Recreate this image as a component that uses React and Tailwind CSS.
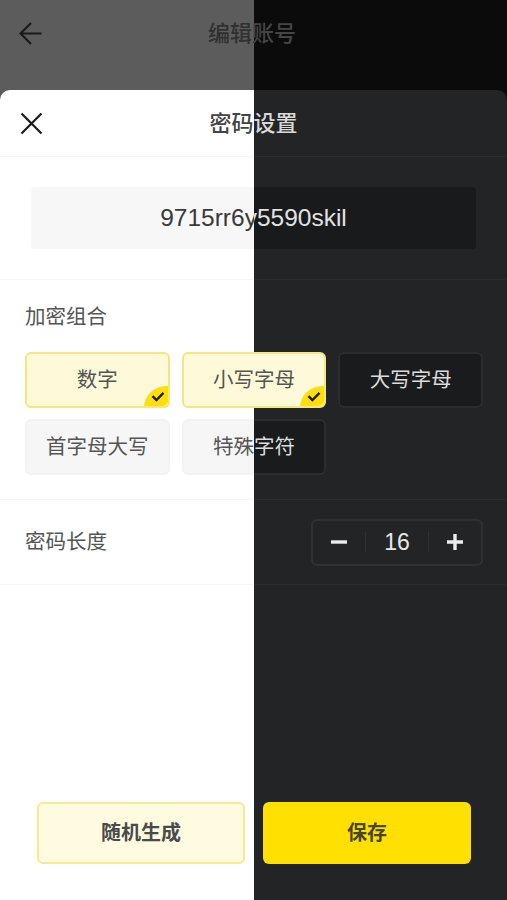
const font = { fontFamily: '"Liberation Sans", "Noto Sans CJK SC", sans-serif' };

function CheckBadge() {
  return (
    <span className="absolute right-0 bottom-0 w-[24px] h-[20px] overflow-hidden rounded-br-[5px]">
      <span className="absolute left-0 top-0 w-[44px] h-[44px] rounded-full bg-[#ffe000]" />
      <svg className="absolute left-[7px] top-[5px]" width="14" height="11" viewBox="0 0 14 11" fill="none">
        <path d="M1.5 5.2 L5.4 9 L12.5 1.8" stroke="#1c1c1c" strokeWidth="2.4" />
      </svg>
    </span>
  );
}

function Chip({ label, selected, dark }) {
  const tone = selected
    ? "bg-[#fefad9] border-2 border-[#f6e67f] text-[#555555]"
    : dark
    ? "bg-[#191b1c] border-2 border-[#2a2c2e] text-[#dcdcdc]"
    : "bg-[#f6f6f6] border-2 border-[#f3f3f3] text-[#555555]";
  return (
    <div className={"relative h-[56px] pt-[1px] rounded-[6px] flex items-center justify-center text-[20.5px] " + tone}>
      {label}
      {selected && <CheckBadge />}
    </div>
  );
}

function Screen({ dark }) {
  const line = dark ? "border-[#2a2c2e]" : "border-[#f5f5f5]";
  const text = dark ? "text-[#d4d4d4]" : "text-[#555555]";
  const titleText = dark ? "text-[#d8d8d8]" : "text-[#444444]";
  const stroke = dark ? "#404040" : "#1a1a1a";
  return (
    <div className={"w-[507px] h-[900px] flex flex-col " + (dark ? "bg-[#0b0b0b]" : "bg-[#5c5c5c]")} style={font}>
      <div className="h-[90px] shrink-0 relative flex items-start justify-center pt-[18px] pr-[3px]">
        <svg className="absolute left-[19px] top-[22px]" width="23" height="23" viewBox="0 0 23 23" fill="none">
          <path d="M22.5 11.5 H2 M12 1 L1.5 11.5 L12 22" stroke={stroke} strokeWidth="2.2" />
        </svg>
        <span className={"text-[22px] leading-[32px] font-medium " + (dark ? "text-[#454545]" : "text-[#303030]")}>编辑账号</span>
      </div>

      <div className={"flex-1 rounded-t-[10px] flex flex-col " + (dark ? "bg-[#232425]" : "bg-white")}>
        <div className={"h-[67px] shrink-0 relative flex items-center justify-center border-b " + line}>
          <svg className="absolute left-[20px] top-[22px]" width="23" height="23" viewBox="0 0 23 23" fill="none">
            <path d="M1.5 1.5 L21.5 21.5 M21.5 1.5 L1.5 21.5" stroke="#1a1a1a" strokeWidth="2.2" />
          </svg>
          <span className={"text-[22px] font-medium " + titleText}>密码设置</span>
        </div>

        <div className={"h-[123px] shrink-0 flex items-center justify-center px-[31px] border-b " + line}>
          <div className={"w-full h-[62px] rounded-[4px] flex items-center justify-center text-[24.5px] " + (dark ? "bg-[#181a1b] text-[#e2e2e2]" : "bg-[#f7f7f7] text-[#3a3a3a]")}>
            9715rr6y5590skil
          </div>
        </div>

        <div className={"h-[220px] shrink-0 pl-[25px] pr-[24px] pt-[20px] border-b " + line}>
          <div className={"text-[20.5px] leading-[34px] " + text}>加密组合</div>
          <div className="mt-[18px] grid grid-cols-3 gap-x-[12px] gap-y-[11px]">
            <Chip dark={dark} selected label="数字" />
            <Chip dark={dark} selected label="小写字母" />
            <Chip dark={dark} label="大写字母" />
            <Chip dark={dark} label="首字母大写" />
            <Chip dark={dark} label="特殊字符" />
          </div>
        </div>

        <div className={"h-[85px] shrink-0 pl-[25px] pr-[24px] flex items-center justify-between border-b " + line}>
          <span className={"text-[20.5px] " + text}>密码长度</span>
          <div className="w-[172px] h-[47px] rounded-[6px] border-2 border-[#2f3133] flex items-center text-[#e8e8e8]">
            <span className="flex-1 flex items-center justify-center">
              <svg width="18" height="18" viewBox="0 0 18 18"><path d="M1 9 H17" stroke="#ededed" strokeWidth="3.4" /></svg>
            </span>
            <span className="w-px h-[20px] bg-[#2f3133]" />
            <span className="w-[62px] text-center text-[23px]">16</span>
            <span className="w-px h-[20px] bg-[#2f3133]" />
            <span className="flex-1 flex items-center justify-center">
              <svg width="18" height="18" viewBox="0 0 18 18"><path d="M1 9 H17 M9 1 V17" stroke="#ededed" strokeWidth="3.4" /></svg>
            </span>
          </div>
        </div>

        <div className="flex-1" />

        <div className="h-[98px] shrink-0 pl-[37px] flex items-start gap-[18px]">
          <div className="w-[208px] h-[62px] rounded-[6px] bg-[#fefbe0] border-2 border-[#f8e995] flex items-center justify-center text-[20px] font-bold text-[#4a4a4a]">
            随机生成
          </div>
          <div className="w-[208px] h-[62px] rounded-[6px] bg-[#ffe000] flex items-center justify-center text-[20px] font-bold text-[#4a4526]">
            保存
          </div>
        </div>
      </div>
    </div>
  );
}

export default function App() {
  return (
    <div className="relative w-[507px] h-[900px] overflow-hidden">
      <Screen dark={false} />
      <div className="absolute inset-0 [clip-path:inset(0_0_0_254px)]">
        <Screen dark />
      </div>
    </div>
  );
}
